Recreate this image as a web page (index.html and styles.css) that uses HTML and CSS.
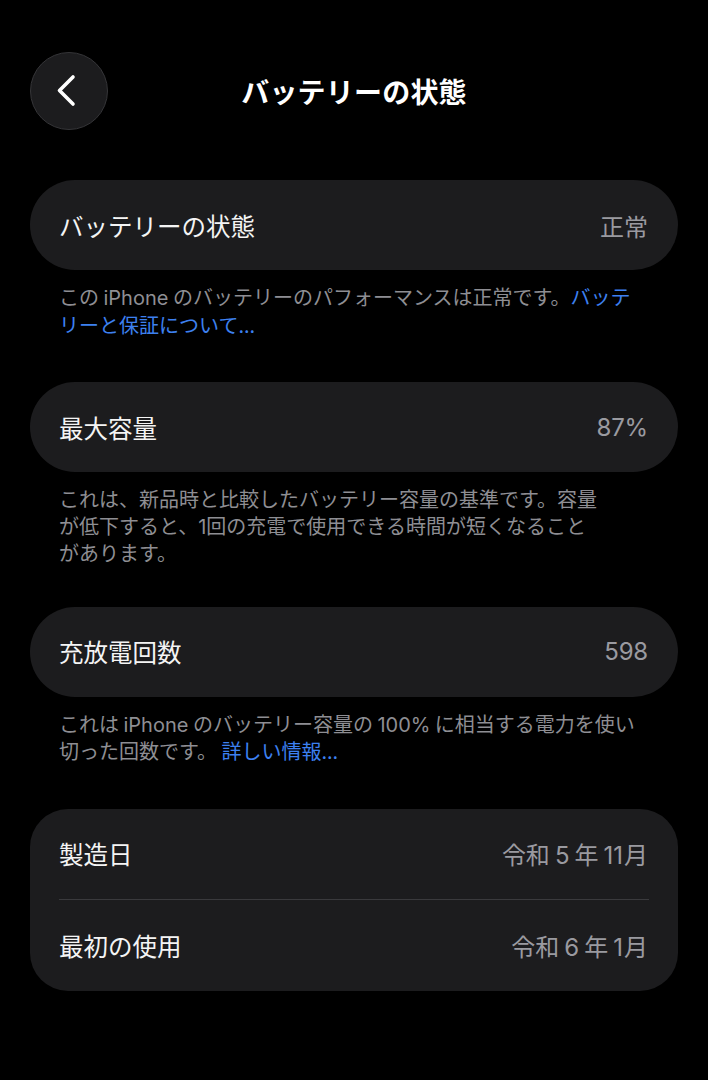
FILE: index.html
```html
<!DOCTYPE html>
<html lang="ja">
<head>
<meta charset="utf-8">
<title>バッテリーの状態</title>
<link rel="stylesheet" href="styles.css">
</head>
<body>
<div class="page">
  <header class="header">
    <div class="back">
      <svg width="78" height="78" viewBox="0 0 78 78" aria-hidden="true">
        <path d="M43 25 L29.5 38.5 L43 52" fill="none" stroke="#ffffff" stroke-width="3.6" stroke-linecap="round" stroke-linejoin="round"/>
      </svg>
    </div>
    <h1 class="title">バッテリーの状態</h1>
    <div class="spacer"></div>
  </header>

  <section class="card">
    <div class="row"><span class="label">バッテリーの状態</span><span class="value">正常</span></div>
  </section>
  <p class="note">この <span class="lat">iPhone</span> のバッテリーのパフォーマンスは正常です。<span class="link">バッテ<br>リーと保証について...</span></p>

  <section class="card">
    <div class="row"><span class="label">最大容量</span><span class="value lat">87%</span></div>
  </section>
  <p class="note tight">これは、新品時と比較したバッテリー容量の基準です。容量<br>が低下すると、<span class="lat">1</span>回の充電で使用できる時間が短くなること<br>があります。</p>

  <section class="card">
    <div class="row"><span class="label">充放電回数</span><span class="value lat">598</span></div>
  </section>
  <p class="note">これは <span class="lat">iPhone</span> のバッテリー容量の <span class="lat">100%</span> に相当する電力を使い<br>切った回数です。 <span class="link">詳しい情報...</span></p>

  <section class="card group">
    <div class="row"><span class="label">製造日</span><span class="value">令和<span class="num">5</span>年<span class="num r">11</span>月</span></div>
    <div class="divider"></div>
    <div class="row"><span class="label">最初の使用</span><span class="value">令和<span class="num">6</span>年<span class="num r">1</span>月</span></div>
  </section>
</div>
</body>
</html>
```

FILE: styles.css
```css
html, body {
  margin: 0;
  padding: 0;
  background: #000000;
}

body {
  font-family: "Noto Sans CJK JP", "Noto Sans", sans-serif;
  color: #ffffff;
}

.page {
  padding: 52px 30px 0 30px;
}

.header {
  display: grid;
  grid-template-columns: 78px 1fr 78px;
  align-items: center;
  height: 78px;
  margin-bottom: 50px;
}

.back {
  width: 78px;
  height: 78px;
  box-sizing: border-box;
  border-radius: 50%;
  background: #1c1c1e;
  border: 1.5px solid #353538;
  display: flex;
  align-items: center;
  justify-content: center;
}

.back svg {
  display: block;
  flex: none;
}

.title {
  margin: 0;
  text-align: center;
  font-size: 28px;
  font-weight: 700;
  letter-spacing: 0.2px;
  color: #ffffff;
}

.card {
  background: #1c1c1e;
  border-radius: 45px;
}

.card.group {
  border-radius: 38px;
}

.row {
  height: 90px;
  display: flex;
  align-items: center;
  justify-content: space-between;
  padding: 0 30px 0 29px;
}

.group .row {
  height: 90.5px;
}

.label {
  font-size: 24.5px;
  font-weight: 400;
  color: #f4f4f4;
}

.value {
  font-size: 24px;
  color: #9a9aa0;
}

.lat {
  font-family: Inter, "Noto Sans CJK JP", sans-serif;
}

.value.lat {
  font-size: 24px;
  letter-spacing: -0.2px;
}

.num {
  font-family: Inter, "Noto Sans CJK JP", sans-serif;
  margin: 0 5px;
}

.num.r {
  margin-right: 1px;
}

.divider {
  height: 1px;
  background: #3a3a3d;
  margin: 0 29px 0 29px;
}

.note {
  margin: 14px 0 44px 0;
  padding: 0 30px 0 29px;
  font-size: 20px;
  line-height: 26.5px;
  color: #8e8e93;
}

.note.tight {
  margin-bottom: 40px;
}

.link {
  color: #3d80f0;
}
```
